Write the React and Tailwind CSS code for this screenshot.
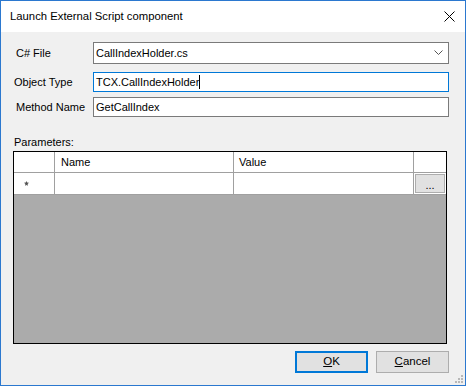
import React from 'react';

const font = { fontFamily: '"Liberation Sans", Arial, sans-serif' };

function TextBox({ value, focused, caret }) {
  return (
    <div
      className={`flex-1 h-[20px] bg-white border flex items-center pl-[2px] text-[11px] text-black ${
        focused ? 'border-[#0078d7]' : 'border-[#7a7a7a]'
      }`}
    >
      <span>{value}</span>
      {caret && <span className="w-px h-[14px] bg-black" />}
    </div>
  );
}

export default function App() {
  return (
    <div
      className="w-[466px] h-[386px] border border-[#2b78cf] flex flex-col bg-[#f0f0f0] select-none"
      style={font}
    >
      {/* Title bar */}
      <div className="h-[31px] bg-white flex items-center justify-between pl-[9px] pr-[9px]">
        <span className="text-[11.3px] text-black">Launch External Script component</span>
        <svg width="11" height="11" viewBox="0 0 11 11" className="mr-[1px]">
          <path d="M0.5 0.5 L10.5 10.5 M10.5 0.5 L0.5 10.5" stroke="#000" strokeWidth="1" />
        </svg>
      </div>

      {/* Body */}
      <div className="flex flex-col flex-1 text-[11px] text-black">
        {/* C# File */}
        <div className="flex items-center mt-[10px] pl-[15px] pr-[16px]">
          <span className="w-[77px]">C# File</span>
          <div className="flex-1 h-[22px] bg-white border border-[#7a7a7a] flex items-center justify-between pl-[2px] pr-[5px] text-[11px]">
            <span>CallIndexHolder.cs</span>
            <svg width="9" height="6" viewBox="0 0 9 6">
              <path d="M0.5 0.5 L4.5 4.5 L8.5 0.5" stroke="#555" strokeWidth="1" fill="none" />
            </svg>
          </div>
        </div>

        {/* Object Type */}
        <div className="flex items-center mt-[8px] pl-[13px] pr-[16px]">
          <span className="w-[79px]">Object Type</span>
          <TextBox value="TCX.CallIndexHolder" focused caret />
        </div>

        {/* Method Name */}
        <div className="flex items-center mt-[5px] pl-[15px] pr-[16px]">
          <span className="w-[77px]">Method Name</span>
          <TextBox value="GetCallIndex" />
        </div>

        {/* Parameters */}
        <div className="mt-[18px] pl-[13px] leading-[14px]">Parameters:</div>
        <div className="mt-[2px] ml-[12px] w-[434px] h-[193px] border border-black bg-[#ababab] flex flex-col">
          <div className="flex h-[21px] bg-white border-b border-[#a0a0a0]">
            <div className="w-[41px] border-r border-[#a0a0a0]" />
            <div className="w-[179px] border-r border-[#a0a0a0] flex items-center pl-[6px]">Name</div>
            <div className="w-[180px] border-r border-[#a0a0a0] flex items-center pl-[5px]">Value</div>
            <div className="flex-1" />
          </div>
          <div className="flex h-[22px] bg-white border-b border-[#a0a0a0]">
            <div className="w-[41px] border-r border-[#a0a0a0] flex items-center pl-[10px]">
              <svg width="5" height="5" viewBox="0 0 5 5">
                <path d="M2.5 0 L3.2 1.6 L5 1.8 L3.6 3 L4 4.8 L2.5 3.9 L1 4.8 L1.4 3 L0 1.8 L1.8 1.6 Z" fill="#555" />
              </svg>
            </div>
            <div className="w-[179px] border-r border-[#a0a0a0]" />
            <div className="w-[180px] border-r border-[#a0a0a0]" />
            <div className="flex-1 flex items-center justify-center">
              <div className="w-[30px] h-[19px] bg-[#e1e1e1] border border-[#adadad] flex items-end justify-center pb-[3px] text-[11px] leading-[8px]">
                ...
              </div>
            </div>
          </div>
        </div>

        {/* Buttons */}
        <div className="flex justify-end gap-[8px] mt-[7px] pr-[16px]">
          <button className="w-[73px] h-[22px] bg-[#e1e1e1] border-2 border-[#0078d7] flex items-center justify-center text-[11.5px]">
            <span><span className="underline">O</span>K</span>
          </button>
          <button className="w-[73px] h-[22px] bg-[#e1e1e1] border border-[#adadad] flex items-center justify-center text-[11.5px]">
            <span><span className="underline">C</span>ancel</span>
          </button>
        </div>

        {/* Size grip */}
        <div className="flex-1 flex justify-end items-end pr-[2px] pb-[2px]">
          <svg width="9" height="9" viewBox="0 0 9 9">
            {[[7, 1], [7, 4], [4, 4], [7, 7], [4, 7], [1, 7]].map(([x, y], i) => (
              <rect key={i} x={x} y={y} width="2" height="2" fill="#b8b8b8" />
            ))}
          </svg>
        </div>
      </div>
    </div>
  );
}
